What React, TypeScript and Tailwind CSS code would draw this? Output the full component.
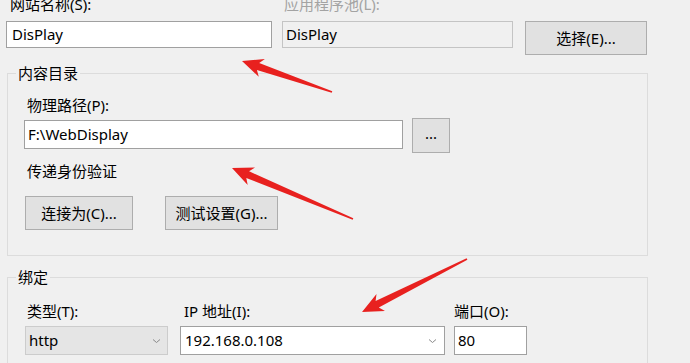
import React from "react";

const font = { fontFamily: '"Noto Sans", "Noto Sans CJK SC", sans-serif' };

type Pt = [number, number];

// build a tapered screenshot-style arrow polygon from tip and tail
const arrowPoints = (tip: Pt, tail: Pt, head = 21, wing = 9.5, neck = 3.6) => {
  const dx = tail[0] - tip[0];
  const dy = tail[1] - tip[1];
  const len = Math.hypot(dx, dy);
  const ux = dx / len;
  const uy = dy / len;
  const nx = -uy;
  const ny = ux;
  const at = (d: number, w: number): string =>
    `${(tip[0] + ux * d + nx * w).toFixed(1)},${(tip[1] + uy * d + ny * w).toFixed(1)}`;
  return [
    at(0, 0),
    at(head, wing),
    at(head - 4, neck),
    at(len, 0.8),
    at(len, -0.8),
    at(head - 4, -neck),
    at(head, -wing),
  ].join(" ");
};

const Label = ({ children, muted }: { children: React.ReactNode; muted?: boolean }) => (
  <div className={`h-5 text-[15px] leading-5 ${muted ? "text-[#a3a3a3]" : "text-black"}`}>{children}</div>
);

const Button = ({ children, className }: { children: React.ReactNode; className: string }) => (
  <div
    className={`flex items-center justify-center border border-[#adadad] bg-[#e1e1e1] text-[15px] text-black ${className}`}
  >
    {children}
  </div>
);

const Chevron = () => (
  <svg width="9" height="6" viewBox="0 0 9 6" className="shrink-0">
    <path d="M1 1.5 L4.5 4.5 L8 1.5" fill="none" stroke="#8a8a8a" strokeWidth="1" />
  </svg>
);

export default function App() {
  return (
    <div className="relative h-[363px] w-[690px] overflow-hidden bg-[#f0f0f0]" style={font}>
      {/* site name / app pool */}
      <div className="-mt-[6px] flex">
        <div className="ml-[10px] w-[272px]">
          <Label>网站名称(S):</Label>
        </div>
        <div className="ml-[2px]">
          <Label muted>应用程序池(L):</Label>
        </div>
      </div>
      <div className="mt-[7px] flex items-start">
        <div className="ml-[6px] flex h-[27px] w-[266px] items-center border border-[#a0a0a0] bg-white pl-[5px] text-[15px] text-black">
          DisPlay
        </div>
        <div className="ml-[10px] flex h-[27px] w-[231px] items-center border border-[#c4c4c4] bg-[#f0f0f0] pl-[3px] text-[15px] text-black">
          DisPlay
        </div>
        <Button className="ml-[12px] h-[34px] w-[122px]">选择(E)...</Button>
      </div>

      {/* content directory */}
      <fieldset className="mt-[8px] ml-[7px] w-[641px] border border-[#dcdcdc] px-[16px] pb-[25px]">
        <legend className="-ml-[8px] px-[2px] text-[15px] leading-5 text-black">内容目录</legend>
        <div className="mt-[12px] pl-[3px]">
          <Label>物理路径(P):</Label>
        </div>
        <div className="mt-[3px] flex items-start">
          <div className="mt-[2px] flex h-[29px] w-[379px] items-center border border-[#a0a0a0] bg-white pl-[3px] text-[15px] text-black">
            F:\WebDisplay
          </div>
          <Button className="ml-[9px] h-[35px] w-[38px] pb-[4px] text-[12px]">...</Button>
        </div>
        <div className="mt-[8px] pl-[3px]">
          <Label>传递身份验证</Label>
        </div>
        <div className="mt-[15px] flex">
          <Button className="ml-[1px] h-[34px] w-[108px]">连接为(C)...</Button>
          <Button className="ml-[32px] h-[34px] w-[113px]">测试设置(G)...</Button>
        </div>
      </fieldset>

      {/* bindings */}
      <fieldset className="mt-[11px] ml-[7px] w-[641px] border border-[#dcdcdc] px-[16px] pb-[25px]">
        <legend className="-ml-[8px] px-[2px] text-[15px] leading-5 text-black">绑定</legend>
        <div className="mt-[14px] flex">
          <div className="w-[156px] pl-[3px]">
            <Label>类型(T):</Label>
          </div>
          <div className="w-[274px] pl-[4px]">
            <Label>IP 地址(I):</Label>
          </div>
          <Label>端口(O):</Label>
        </div>
        <div className="mt-[5px] flex">
          <div className="ml-[1px] flex h-[29px] w-[143px] items-center justify-between border border-[#cccccc] bg-[#e5e5e5] pl-[3px] pr-[6px] text-[15px] text-black">
            http
            <Chevron />
          </div>
          <div className="ml-[12px] flex h-[29px] w-[265px] items-center justify-between border border-[#a0a0a0] bg-white pl-[4px] pr-[7px] text-[15px] text-black">
            192.168.0.108
            <Chevron />
          </div>
          <div className="ml-[9px] flex h-[29px] w-[73px] items-center border border-[#a0a0a0] bg-white pl-[3px] text-[15px] text-black">
            80
          </div>
        </div>
      </fieldset>

      {/* annotation arrows */}
      <svg className="pointer-events-none absolute inset-0" width="690" height="363">
        <polygon points={arrowPoints([242, 61], [332, 92])} fill="#e8211f" />
        <polygon points={arrowPoints([232, 168], [353, 219])} fill="#e8211f" />
        <polygon points={arrowPoints([362, 312], [467, 259])} fill="#e8211f" />
      </svg>
    </div>
  );
}
